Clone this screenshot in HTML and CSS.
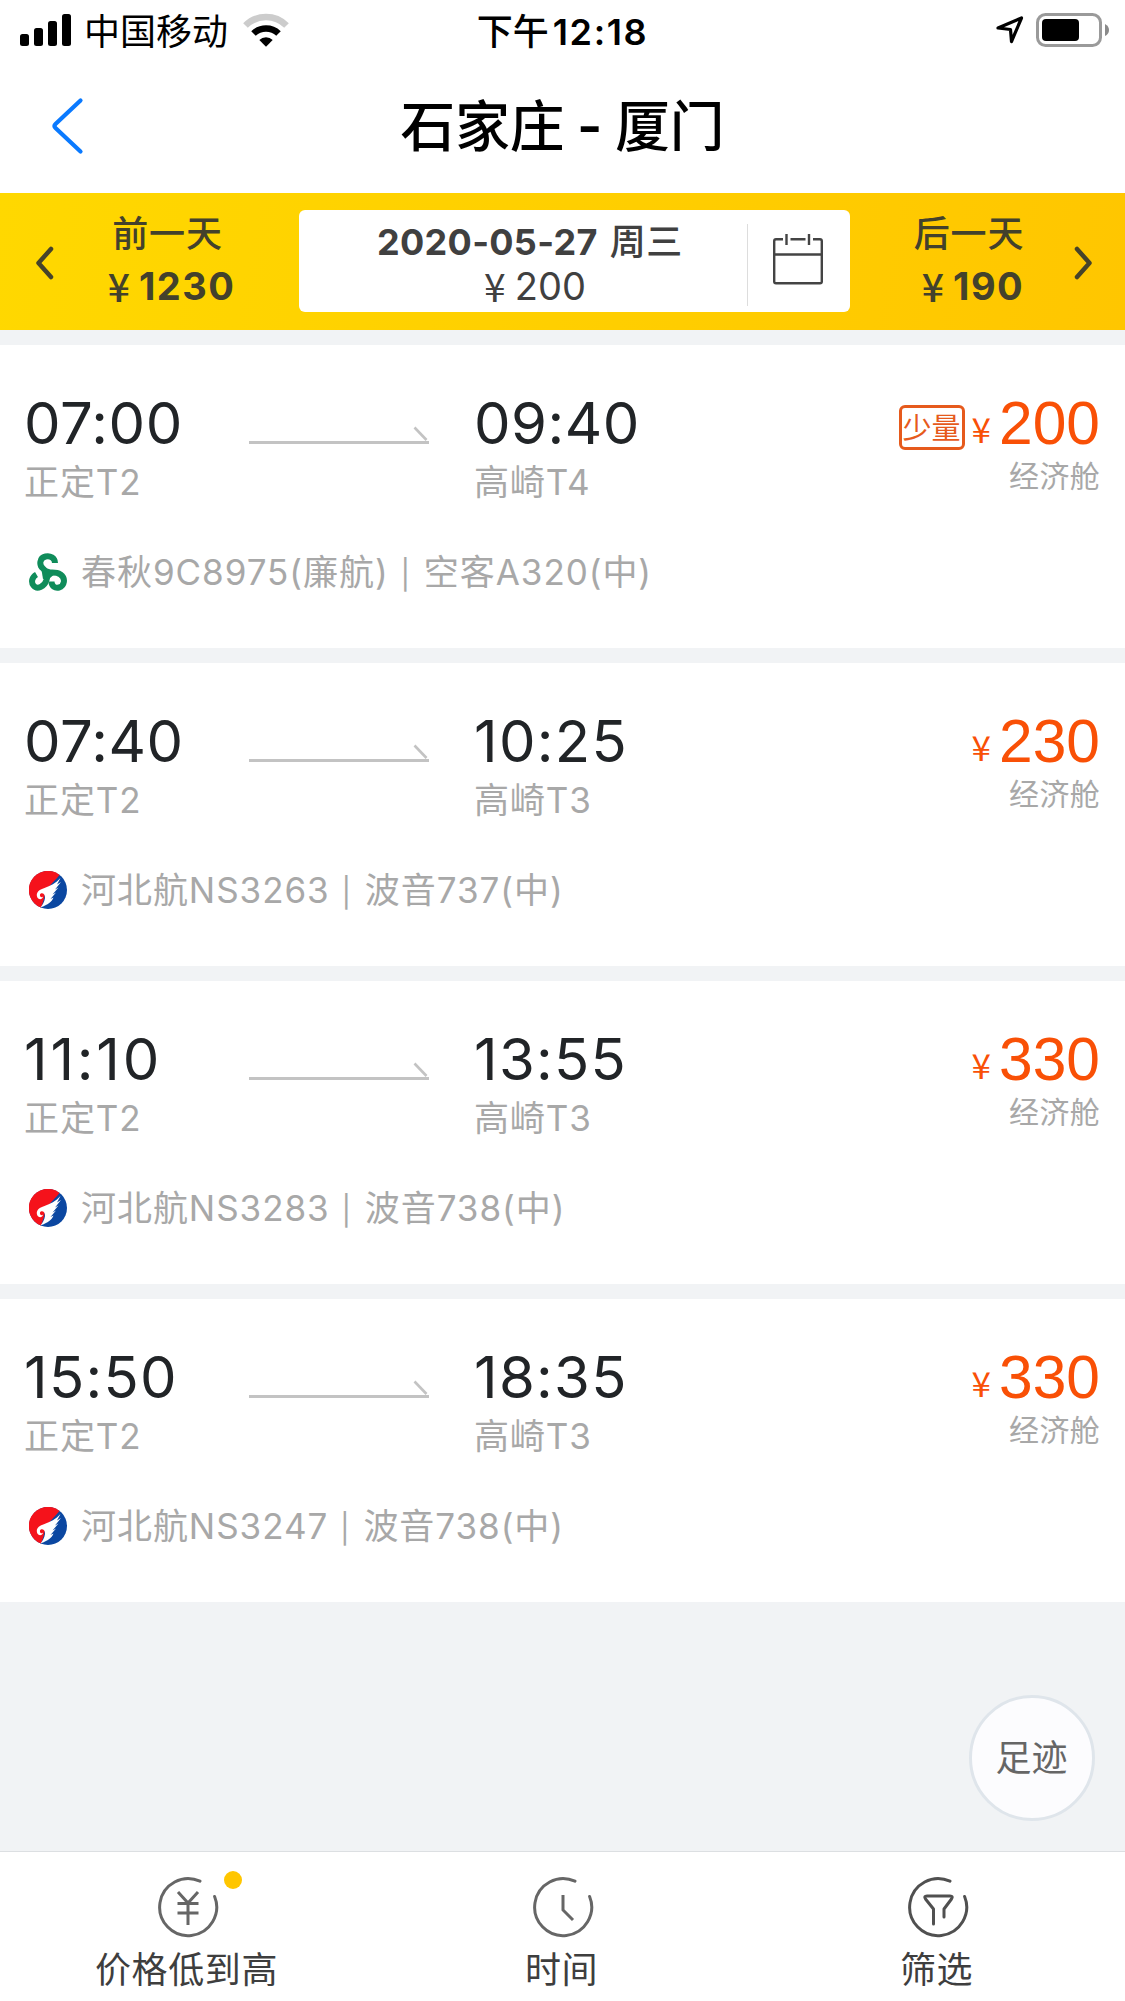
FILE: index.html
```
<!DOCTYPE html>
<html lang="zh-CN">
<head>
<meta charset="utf-8">
<title>石家庄 - 厦门</title>
<link rel="stylesheet" href="styles.css">
</head>
<body>
<svg class="defs" width="0" height="0" aria-hidden="true">
  <symbol id="arrow" viewBox="0 0 180 20">
    <path d="M0 17.500H180" stroke="#c3c3c3" stroke-width="3"/>
    <path d="M165.500 2.500L177.500 15" stroke="#c3c3c3" stroke-width="2.600" fill="none"/>
  </symbol>
  <symbol id="spring" viewBox="0 0 38 38">
    <g fill="none" stroke="#0f8c5a" stroke-width="6">
      <path d="M26 10C26 4.500 21 2.500 16.500 3.500C10.500 4.800 9.800 12 14 15.500C17.500 18.500 19.500 21 17.500 27C15.500 34 8 37 4.500 32.500C1.800 29 3 24 7.500 21.500"/>
      <path d="M17 20C22 19.500 27 18.500 31.500 21.500C37 25.500 35.500 33 30 34.500C26 35.500 22.500 33 22.500 28.500"/>
    </g>
    <path d="M12 14L20 16L27 20L21 25L14 26Z" fill="#0f8c5a"/>
  </symbol>
  <symbol id="hebei" viewBox="0 0 38 38">
    <circle cx="19" cy="19" r="19" fill="#0b47a1"/>
    <path d="M12 36.600A19 19 0 1 1 30.500 3.900C24 12 17 17 16 22C15 29 14 31 12 36.600Z" fill="#f5121b"/>
    <path d="M31.500 7C27 12 21 15 15.500 17C10 18.500 7 21.500 8 25.500C9 29 13.500 29 14 25.500C13 27 10.500 26 11 23.500C12 21 16.500 22 16 27C15.500 31 13.500 34 11.500 36.300C19 34 23 30.500 24.500 26.500L21.500 28L27 21.500L23.500 23.500L29.500 16.500L26 18.500L32 11L28 13.500Z" fill="#fff"/>
  </symbol>
</svg>

<header class="status">
  <div class="carrier">
    <svg width="51" height="32" viewBox="0 0 51 32"><rect y="20" width="9" height="12" rx="2.500"/><rect x="14" y="14" width="9" height="18" rx="2.500"/><rect x="28" y="7" width="9" height="25" rx="2.500"/><rect x="42" width="9" height="32" rx="2.500"/></svg>
    <span>中国移动</span>
    <svg width="46" height="34" viewBox="0 0 46 34"><path d="M2.500 12.500A29 29 0 0 1 43.500 12.500" fill="none" stroke="#ccc" stroke-width="6.500"/><path d="M10.500 20.500A18 18 0 0 1 35.500 20.500" fill="none" stroke="#000" stroke-width="6.500"/><path d="M16.300 27A9.500 9.500 0 0 1 29.700 27L23 33.700Z"/></svg>
  </div>
  <div class="clock"><span>下午</span><b>12:18</b></div>
  <div class="power">
    <svg width="30" height="30" viewBox="0 0 30 30"><path d="M3 13L26.500 3L16.500 26.500L15.500 14.500Z" fill="none" stroke="#000" stroke-width="3.200" stroke-linejoin="round"/></svg>
    <svg width="74" height="34" viewBox="0 0 74 34"><rect x="1.500" y="1.500" width="63" height="31" rx="8" fill="none" stroke="#9a9a9a" stroke-width="3"/><rect x="6" y="6" width="37" height="22" rx="4"/><path d="M69 11Q73 13 73 17T69 23Z" fill="#8a8a8a"/></svg>
  </div>
</header>

<nav class="nav">
  <svg class="back" width="34" height="60" viewBox="0 0 34 60"><path d="M30.500 4.500L5.500 28Q3.500 30 5.500 32L30.500 55.500" fill="none" stroke="#0a7aff" stroke-width="4.200" stroke-linecap="round"/></svg>
  <h1>石家庄 <b>-</b> 厦门</h1>
</nav>

<section class="days">
  <svg class="chev" width="20" height="34" viewBox="0 0 20 34"><path d="M17 3L4.500 17L17 31" fill="none" stroke="#46432a" stroke-width="4.500" stroke-linecap="round" stroke-linejoin="round"/></svg>
  <div class="day prev"><div class="name">前一天</div><div class="fare"><i>¥</i><span>1230</span></div></div>
  <div class="picker">
    <div class="current">
      <div class="date"><b>2020-05-27</b><span>周三</span></div>
      <div class="fare"><i>¥</i><span>200</span></div>
    </div>
    <div class="cal"><svg width="52" height="52" viewBox="0 0 52 52" fill="none" stroke="#444" stroke-width="2.400"><path d="M11 5.200H4Q2.200 5.200 2.200 7V47.500Q2.200 49.300 4 49.300H48Q49.800 49.300 49.800 47.500V7Q49.800 5.200 48 5.200H41M18.500 5.200H33.500M2.200 20.500H49.800M14.500 0V11M37 0V11"/></svg></div>
  </div>
  <div class="day next"><div class="name">后一天</div><div class="fare"><i>¥</i><span>190</span></div></div>
  <svg class="chev" width="20" height="34" viewBox="0 0 20 34"><path d="M3 3L15.500 17L3 31" fill="none" stroke="#46432a" stroke-width="4.500" stroke-linecap="round" stroke-linejoin="round"/></svg>
</section>

<main class="list">
  <article class="flight">
    <div class="route">
      <div class="stop"><div class="time">07:00</div><div class="port">正定T2</div></div>
      <svg class="line"><use href="#arrow"/></svg>
      <div class="stop"><div class="time">09:40</div><div class="port">高崎T4</div></div>
      <div class="cost"><div class="price"><em>少量</em><i>¥</i><span>200</span></div><div class="cabin">经济舱</div></div>
    </div>
    <div class="plane"><svg><use href="#spring"/></svg><span>春秋9C8975(廉航) <u>|</u> 空客A320(中)</span></div>
  </article>
  <article class="flight">
    <div class="route">
      <div class="stop"><div class="time">07:40</div><div class="port">正定T2</div></div>
      <svg class="line"><use href="#arrow"/></svg>
      <div class="stop"><div class="time wide">10:25</div><div class="port">高崎T3</div></div>
      <div class="cost"><div class="price"><i>¥</i><span>230</span></div><div class="cabin">经济舱</div></div>
    </div>
    <div class="plane"><svg><use href="#hebei"/></svg><span>河北航NS3263 <u>|</u> 波音737(中)</span></div>
  </article>
  <article class="flight">
    <div class="route">
      <div class="stop"><div class="time wider">11:10</div><div class="port">正定T2</div></div>
      <svg class="line"><use href="#arrow"/></svg>
      <div class="stop"><div class="time wide">13:55</div><div class="port">高崎T3</div></div>
      <div class="cost"><div class="price"><i>¥</i><span>330</span></div><div class="cabin">经济舱</div></div>
    </div>
    <div class="plane"><svg><use href="#hebei"/></svg><span>河北航NS3283 <u>|</u> 波音738(中)</span></div>
  </article>
  <article class="flight">
    <div class="route">
      <div class="stop"><div class="time wide">15:50</div><div class="port">正定T2</div></div>
      <svg class="line"><use href="#arrow"/></svg>
      <div class="stop"><div class="time wide">18:35</div><div class="port">高崎T3</div></div>
      <div class="cost"><div class="price"><i>¥</i><span>330</span></div><div class="cabin">经济舱</div></div>
    </div>
    <div class="plane"><svg><use href="#hebei"/></svg><span>河北航NS3247 <u>|</u> 波音738(中)</span></div>
  </article>
</main>

<button class="history">足迹</button>

<footer class="tabs">
  <div class="tab">
    <svg width="64" height="64" viewBox="0 0 64 64" fill="none" stroke="#666" stroke-width="3"><path d="M44 6.200A28.500 28.500 0 1 0 58.600 21.500" stroke-linecap="round"/><path d="M22 17L32 28L42 17M32 28V50M21.500 28.500H42.500M21.500 38H42.500"/></svg>
    <span>价格低到高</span><u class="dot"></u>
  </div>
  <div class="tab">
    <svg width="64" height="64" viewBox="0 0 64 64" fill="none" stroke="#666" stroke-width="3"><path d="M44 6.200A28.500 28.500 0 1 0 58.600 21.500" stroke-linecap="round"/><path d="M32 20V35L42 45"/></svg>
    <span>时间</span>
  </div>
  <div class="tab">
    <svg width="64" height="64" viewBox="0 0 64 64" fill="none" stroke="#505050" stroke-width="3" stroke-linecap="round" stroke-linejoin="round"><path d="M44 6.200A28.500 28.500 0 1 0 58.600 21.500"/><path d="M27.500 49V34L19.500 24Q17.500 21 21 21H44Q47.500 21 45.500 24L38 34V42"/></svg>
    <span>筛选</span>
  </div>
</footer>
</body>
</html>
```
FILE: styles.css
```
* { box-sizing: border-box; margin: 0; padding: 0; }
body {
  height: 2001px;
  display: flex;
  flex-direction: column;
  background: #f1f3f5;
  font-family: Inter, "Noto Sans CJK SC", sans-serif;
  color: #444;
  position: relative;
  overflow: hidden;
}
svg { display: block; flex: none; }
i, em, u { font-style: normal; text-decoration: none; }
.defs { position: absolute; }

.status {
  height: 64px;
  display: grid;
  grid-template-columns: 1fr auto 1fr;
  background: #fff;
  color: #000;
  font-size: 36px;
  line-height: 64px;
}
.carrier { display: flex; align-items: flex-start; padding-left: 20px; }
.carrier svg { margin-top: 14px; }
.carrier svg:last-child { margin-top: 13px; margin-left: 15px; }
.carrier span { margin-left: 13px; }
.clock { display: flex; gap: 4px; }
.clock span { font-weight: 500; }
.clock b { font-weight: 600; letter-spacing: 1.600px; }
.power { display: flex; justify-content: flex-end; padding: 13px 15px 0 0; }
.power svg:first-child { margin: 2px 11px 0 0; }

.nav {
  height: 129px;
  display: grid;
  grid-template-columns: 86px 1fr 86px;
  background: #fff;
  color: #000;
}
.back { margin: 32px 0 0 50px; }
h1 { font-size: 54.700px; font-weight: 500; line-height: 124px; text-align: center; word-spacing: -2px; }
h1 b { font-weight: 600; }

.days {
  height: 137px;
  display: flex;
  align-items: flex-start;
  background: linear-gradient(100deg, #ffd800, #ffc600);
  color: #43412c;
}
.chev { margin: 53px 0 0 34px; }
.chev:last-child { margin-left: 36px; }
.day { text-align: center; flex: none; }
.prev { width: 245px; padding-right: 18px; }
.next { width: 188px; padding-left: 50px; white-space: nowrap; }
.name { font-size: 36px; font-weight: 500; line-height: 44px; padding-top: 19px; letter-spacing: .8px; }
.fare { display: flex; justify-content: center; gap: 9px; font-size: 38px; line-height: 36px; }
.fare i { font-family: "Noto Sans CJK SC", sans-serif; font-size: 39px; line-height: 34px; }
.day .fare { font-weight: 700; margin-top: 12px; padding-left: 8px; gap: 8px; letter-spacing: 1.500px; }
.day .fare i { font-weight: 500; letter-spacing: 1px; }
.picker {
  width: 551px;
  height: 102px;
  flex: none;
  margin-top: 17px;
  display: flex;
  background: #fff;
  border-radius: 6px;
  color: #404040;
}
.current { width: 448px; padding-left: 14px; }
.date { display: flex; justify-content: center; gap: 12px; font-size: 36px; line-height: 36px; padding-top: 14px; }
.date b { letter-spacing: .3px; }
.date span { font-weight: 500; letter-spacing: .6px; }
.current .fare { margin-top: 8px; padding-left: 10px; }
.cal { flex: 1; height: 82px; margin-top: 14px; border-left: 1px solid #ddd; padding: 10px 0 0 24px; }

.list { display: flex; flex-direction: column; gap: 15px; padding-top: 15px; }
.flight { height: 303px; background: #fff; padding: 49px 25px 0 24px; }
.route { display: grid; grid-template-columns: 225px 225px 1fr auto; }
.time { font-size: 58px; line-height: 58px; color: #212427; letter-spacing: .5px; }
.time.wide { letter-spacing: 1.300px; }
.time.wider { letter-spacing: 2.800px; }
.port { margin-top: 8px; font-size: 35px; line-height: 44px; color: #a8a8a8; letter-spacing: .9px; }
.line { width: 180px; height: 20px; margin-top: 31px; }
.price { display: flex; justify-content: flex-end; font: 60.500px/58px "Liberation Sans", sans-serif; color: #f95006; }
.price i { font: 35px/36px "Noto Sans CJK SC", sans-serif; margin: 16px 8px 0 0; }
.price em {
  width: 66px; height: 45px; margin: 11px 7px 0 0;
  border: 3px solid #e65a1c; border-radius: 6px;
  font: 29px/37px "Noto Sans CJK SC", sans-serif; text-align: center; white-space: nowrap; color: #e65a1c;
}
.cabin { margin-top: 6px; font-size: 30px; line-height: 36px; color: #a8a8a8; text-align: right; letter-spacing: .3px; }
.plane { margin-top: 46px; display: flex; align-items: center; padding-left: 5px; gap: 14px; font-size: 35px; line-height: 44px; color: #a8a8a8; letter-spacing: .95px; }
.plane svg { width: 38px; height: 38px; }
.plane u { font-size: 29px; line-height: 30px; margin: 0 2px 0 1px; }

.history {
  position: absolute; left: 969px; top: 1695px; width: 126px; height: 126px; padding-right: 1px;
  border: 3px solid #dfe5eb; border-radius: 50%; background: #fcfcfe;
  font: 36px/44px Inter, "Noto Sans CJK SC", sans-serif; color: #666;
}

.tabs {
  margin-top: auto; height: 150px; display: grid; grid-template-columns: repeat(3, 1fr);
  background: #fff; border-top: 1px solid #dcdfe2;
}
.tab { position: relative; display: flex; flex-direction: column; align-items: center; padding-top: 23px; font-size: 36px; line-height: 44px; letter-spacing: .6px; color: #3e3e3e; }
.tab span { margin-top: 9px; padding-right: 2px; }
.dot { position: absolute; left: 224px; top: 19px; width: 18px; height: 18px; border-radius: 50%; background: #ffc600; }
```
